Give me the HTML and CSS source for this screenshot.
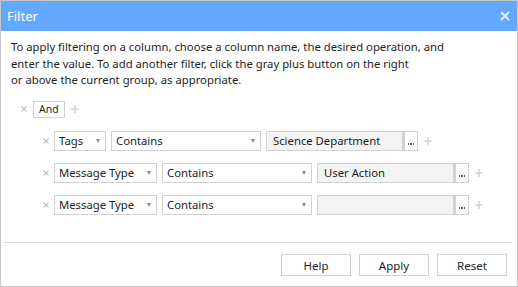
FILE: index.html
```html
<!DOCTYPE html>
<html lang="en">
<head>
    <meta charset="UTF-8">
    <title>Filter</title>
    <link rel="stylesheet" href="styles.css">
</head>
<body>
    <div class="dialog">
        <div class="title-bar">
            <span class="title">Filter</span>
            <svg class="close" width="10" height="10" viewBox="0 0 10 10">
                <path d="M1 1 L9 9 M9 1 L1 9" stroke="#e4efff" stroke-width="1.8"/>
            </svg>
        </div>

        <p class="hint">
            To apply filtering on a column, choose a column name, the desired operation, and<br>
            enter the value. To add another filter, click the gray plus button on the right<br>
            or above the current group, as appropriate.
        </p>

        <div class="group-row">
            <svg class="remove" width="6" height="6" viewBox="0 0 6 6"><path d="M0.5 0.5 L5.5 5.5 M5.5 0.5 L0.5 5.5" stroke="#c4c4c4" stroke-width="1.2"/></svg>
            <span class="group-op">And</span>
            <svg class="add" width="8" height="8" viewBox="0 0 8 8"><path d="M4 0 V8 M0 4 H8" stroke="#d4d4d4" stroke-width="1.6"/></svg>
        </div>

        <div class="conditions">
            <div class="condition">
                <svg class="remove" width="6" height="6" viewBox="0 0 6 6"><path d="M0.5 0.5 L5.5 5.5 M5.5 0.5 L0.5 5.5" stroke="#c4c4c4" stroke-width="1.2"/></svg>
                <div class="select col-short"><span>Tags</span><i class="arrow"></i></div>
                <div class="select op-long"><span>Contains</span><i class="arrow"></i></div>
                <div class="value"><span>Science Department</span></div>
                <div class="dots"><i></i><i></i><i></i></div>
                <svg class="add" width="8" height="8" viewBox="0 0 8 8"><path d="M4 0 V8 M0 4 H8" stroke="#d4d4d4" stroke-width="1.6"/></svg>
            </div>
            <div class="condition">
                <svg class="remove" width="6" height="6" viewBox="0 0 6 6"><path d="M0.5 0.5 L5.5 5.5 M5.5 0.5 L0.5 5.5" stroke="#c4c4c4" stroke-width="1.2"/></svg>
                <div class="select col-long"><span>Message Type</span><i class="arrow"></i></div>
                <div class="select op-long"><span>Contains</span><i class="arrow"></i></div>
                <div class="value"><span>User Action</span></div>
                <div class="dots"><i></i><i></i><i></i></div>
                <svg class="add" width="8" height="8" viewBox="0 0 8 8"><path d="M4 0 V8 M0 4 H8" stroke="#d4d4d4" stroke-width="1.6"/></svg>
            </div>
            <div class="condition">
                <svg class="remove" width="6" height="6" viewBox="0 0 6 6"><path d="M0.5 0.5 L5.5 5.5 M5.5 0.5 L0.5 5.5" stroke="#c4c4c4" stroke-width="1.2"/></svg>
                <div class="select col-long"><span>Message Type</span><i class="arrow"></i></div>
                <div class="select op-long"><span>Contains</span><i class="arrow"></i></div>
                <div class="value"><span></span></div>
                <div class="dots"><i></i><i></i><i></i></div>
                <svg class="add" width="8" height="8" viewBox="0 0 8 8"><path d="M4 0 V8 M0 4 H8" stroke="#d4d4d4" stroke-width="1.6"/></svg>
            </div>
        </div>

        <div class="footer">
            <button>Help</button>
            <button>Apply</button>
            <button>Reset</button>
        </div>
    </div>
</body>
</html>
```

FILE: styles.css
```css
:root {
    --title: #63a8ff;
    --border: #d2d2d2;
    --frame: #c8c8c8;
    --text: #1e1e1e;
    --field: #f3f3f3;
}

* {
    box-sizing: border-box;
    font-family: 'Noto Sans', 'Open Sans', sans-serif;
}

body {
    margin: 0;
    background: white;
}

.dialog {
    width: 518px;
    height: 287px;
    border: 1px solid var(--frame);
    color: var(--text);
    display: flex;
    flex-direction: column;
}

.title-bar {
    height: 30px;
    background: var(--title);
    color: white;
    display: flex;
    align-items: center;
    justify-content: space-between;
    padding: 0 7px 0 6px;
}

.title {
    font-size: 13px;
}

.hint {
    margin: 8px 0 0 10px;
    font-size: 11.3px;
    line-height: 16.5px;
}

.group-row {
    display: flex;
    align-items: center;
    margin: 12px 0 0 20px;
    height: 17px;
}

.remove {
    margin-right: 6px;
}

.add {
    margin-left: 6px;
}

.group-op {
    border: 1px solid var(--border);
    height: 17px;
    padding: 0 5px;
    font-size: 10.5px;
    line-height: 15px;
}

.conditions {
    margin: 13px 0 0 42px;
    display: flex;
    flex-direction: column;
    gap: 12px;
}

.condition {
    display: flex;
    align-items: center;
    height: 20px;
}

.condition .remove {
    margin-right: 5px;
}

.select, .value {
    height: 20px;
    border: 1px solid var(--border);
    display: flex;
    align-items: center;
    justify-content: space-between;
    font-size: 11.3px;
    padding: 0 0 0 4px;
    margin-right: 5px;
}

.arrow {
    width: 0;
    height: 0;
    border-left: 2.5px solid transparent;
    border-right: 2.5px solid transparent;
    border-top: 4px solid #8c8c8c;
    margin-right: 5px;
}

.col-short { width: 52px; }
.col-long { width: 103px; }
.op-long { width: 150px; }

.value {
    width: 137px;
    background: var(--field);
    margin-right: 0;
    padding-left: 6px;
}

.dots {
    width: 15px;
    height: 20px;
    border: 1px solid var(--border);
    border-left: 2px solid var(--border);
    display: flex;
    align-items: flex-end;
    justify-content: center;
    gap: 1px;
    padding-bottom: 5px;
}

.dots i {
    width: 1.5px;
    height: 1.5px;
    background: #5c5c66;
}

.footer {
    margin: auto 5px 0 2px;
    border-top: 1px solid #dcdcdc;
    display: flex;
    justify-content: flex-end;
    gap: 8px;
    padding: 11px 5px 10px 0;
}

.footer button {
    width: 70px;
    height: 22px;
    background: white;
    border: 1px solid var(--border);
    font-size: 11.5px;
    color: var(--text);
    padding: 0;
}
```
